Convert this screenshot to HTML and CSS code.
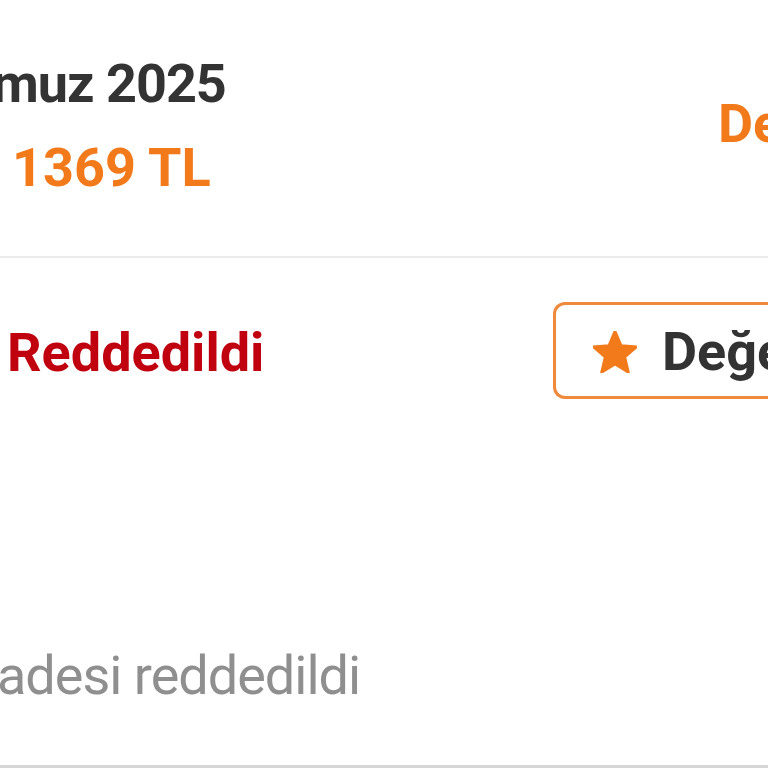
FILE: index.html
```html
<!DOCTYPE html>
<html lang="tr">
<head>
    <meta charset="UTF-8">
    <meta name="viewport" content="width=device-width, initial-scale=1.0">
    <title>Siparişlerim</title>
    <link rel="stylesheet" href="styles.css">
</head>
<body>
    <div class="order-head">
        <div class="order-info">
            <div class="order-date">muz 2025</div>
            <div class="order-total">1369 TL</div>
        </div>
        <div class="order-link">Detaylar</div>
    </div>

    <div class="order-body">
        <div class="status-row">
            <div class="status">Reddedildi</div>
            <button class="rate-btn">
                <svg class="star" viewBox="2 2 20 19.3" width="44" height="42">
                    <path d="M12 17.27L18.18 21l-1.64-7.03L22 9.24l-7.19-.61L12 2 9.19 8.63 2 9.24l5.46 4.73L5.82 21z" fill="#f27a1a" stroke="#f27a1a" stroke-width="1.2" stroke-linejoin="round"/>
                </svg>
                <span>Değerlendir</span>
            </button>
        </div>
        <div class="status-note">adesi reddedildi</div>
    </div>
</body>
</html>
```

FILE: styles.css
```css
body {
    margin: 0;
    background: #fff;
    font-family: Roboto, "Noto Sans", sans-serif;
    overflow: hidden;
    white-space: nowrap;
}

.order-head {
    display: flex;
    align-items: center;
    padding: 52px 0 56px 0;
    border-bottom: 2px solid #ebebeb;
}

.order-info {
    flex: 1;
}

.order-date {
    margin-left: -8px;    /* row starts left of the window */
    font-size: 54px;
    line-height: 64px;
    letter-spacing: -1px;
    font-weight: 700;
    color: #333;
}

.order-total {
    margin-top: 20px;
    padding-left: 12px;
    font-size: 54px;
    line-height: 64px;
    font-weight: 700;
    color: #f27a1a;
}

.order-link {
    width: 50px;          /* runs off the right edge */
    margin-top: -4px;
    font-size: 54px;
    line-height: 64px;
    font-weight: 700;
    color: #f27a1a;
}

.status-row {
    display: flex;
    align-items: flex-start;
}

.status {
    flex: 1;
    margin-top: 63px;
    padding-left: 7px;
    font-size: 54px;
    line-height: 64px;
    font-weight: 700;
    color: #c0000e;
}

.rate-btn {
    display: flex;
    align-items: center;
    gap: 25px;
    width: 215px;         /* clipped by the window */
    height: 97px;
    margin-top: 44px;
    padding: 0 0 0 37px;
    box-sizing: border-box;
    background: #fff;
    border: 3px solid #ef8a3c;
    border-right: none;
    border-radius: 12px 0 0 12px;
    font-family: inherit;
    font-size: 54px;
    font-weight: 700;
    color: #333;
    overflow: visible;
}

.rate-btn span {
    line-height: 64px;
    margin-top: 2px;
}

.star {
    flex-shrink: 0;
    margin-top: 2px;
}

.status-note {
    margin-top: 245px;
    margin-left: -3px;
    padding-bottom: 57px;
    font-size: 54px;
    line-height: 64px;
    letter-spacing: -1px;
    color: #8f8f8f;
    border-bottom: 3px solid #d6d6d6;
}
```
